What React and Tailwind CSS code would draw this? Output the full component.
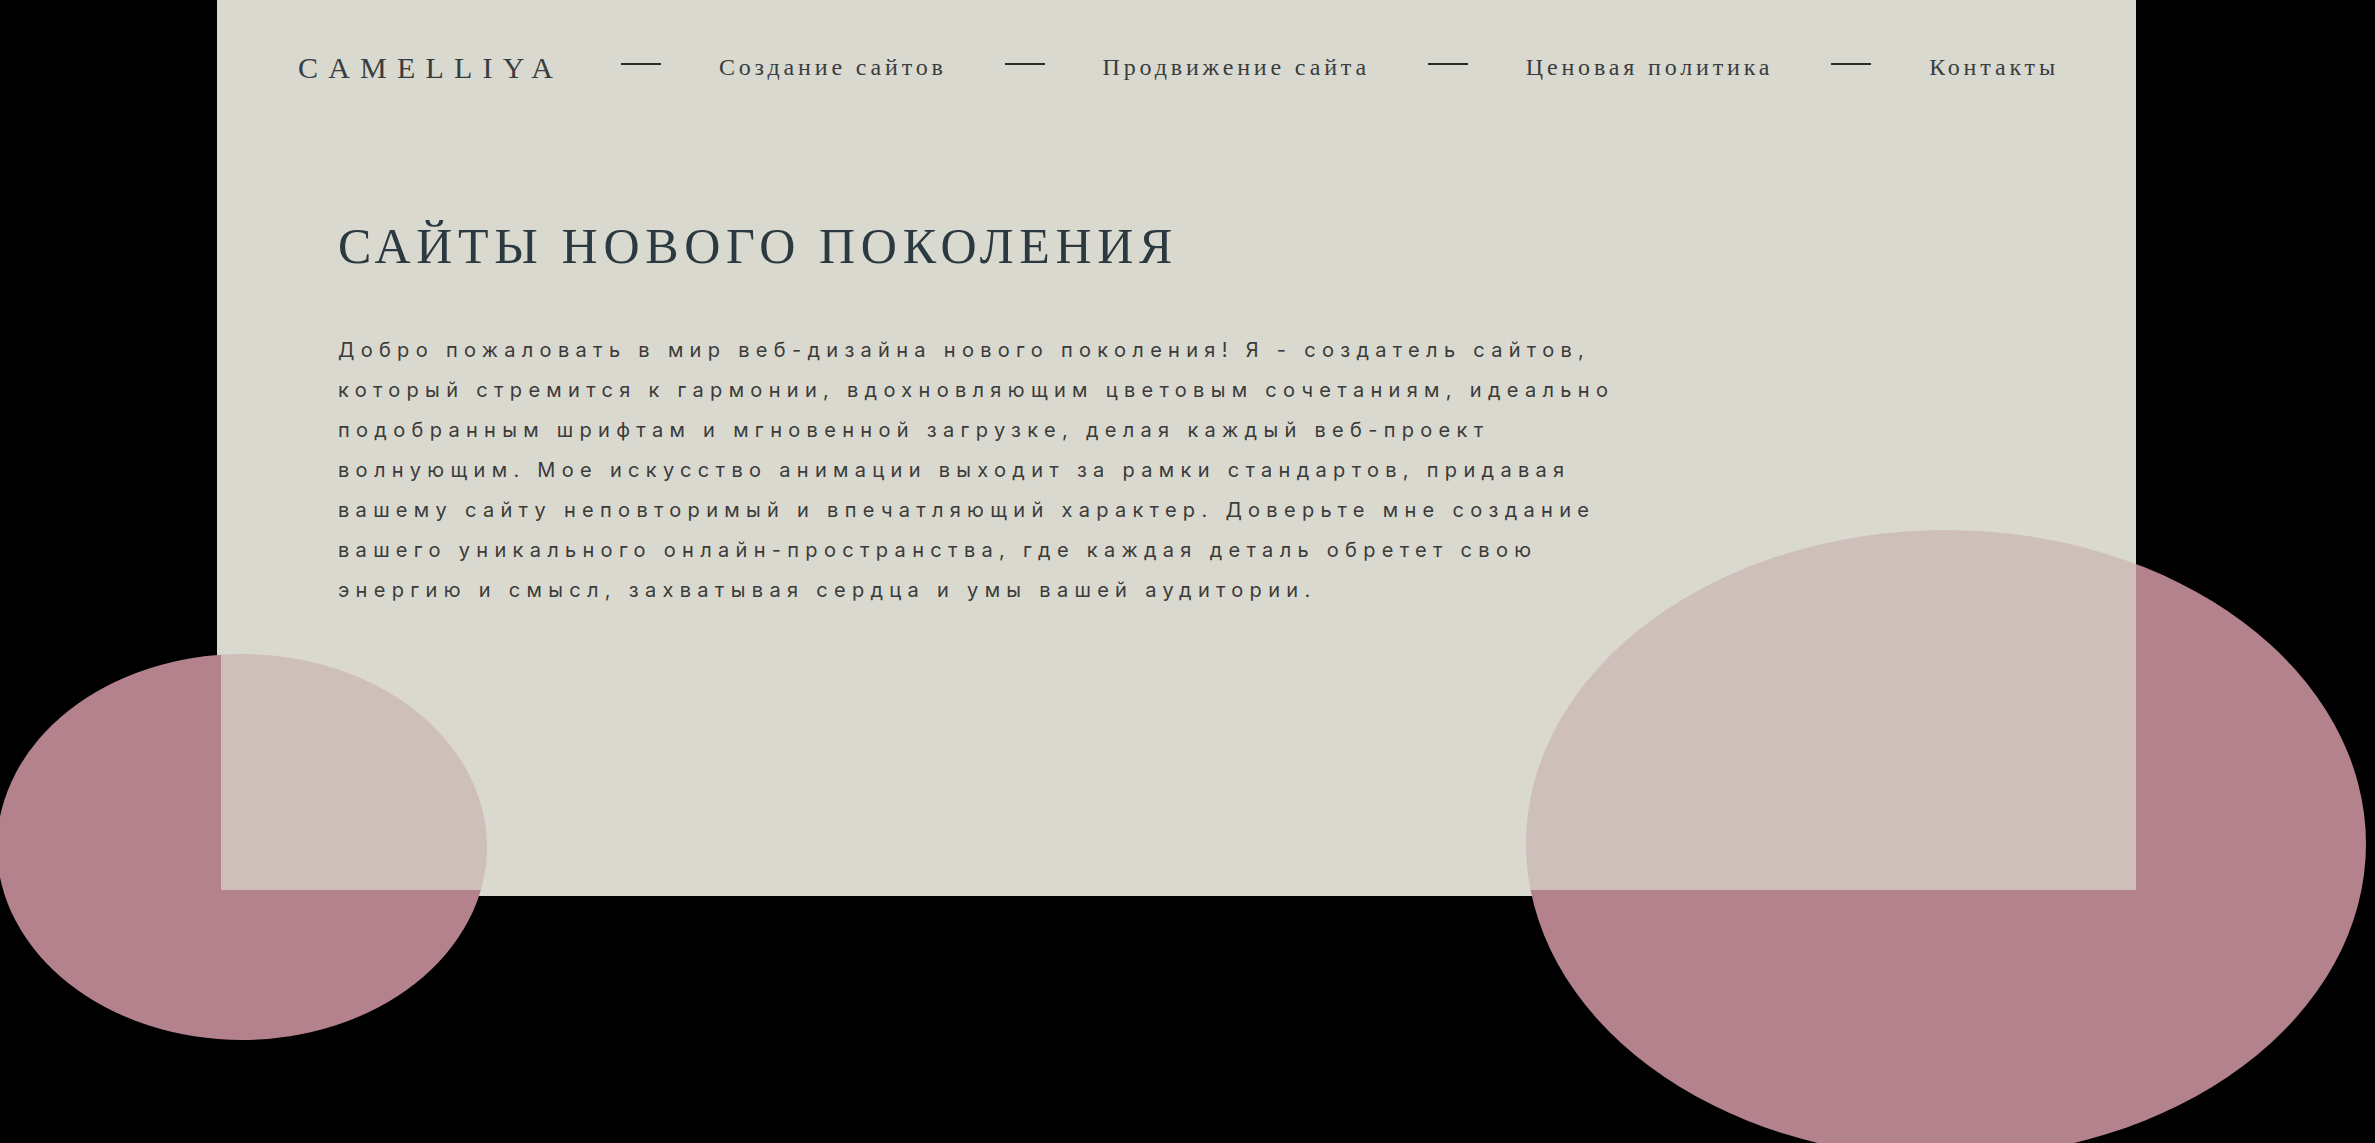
import React from 'react'

const NAV_LINKS = ['Создание сайтов', 'Продвижение сайта', 'Ценовая политика', 'Контакты']

const serif = "font-['Liberation_Serif','DejaVu_Serif',serif]"
const sans = "font-['Inter','Noto_Sans',sans-serif]"

function Dash() {
  return <span className="block w-10 h-[1.5px] bg-[#2a2a2a] mb-[6px]" />
}

export default function App() {
  return (
    <div className="relative h-[1143px] overflow-hidden bg-black">
      {/* card */}
      <section className="ml-[217px] w-[1919px] h-[896px] bg-[#dad9cf]">
        <div className="relative z-10 ml-1 h-[890px] bg-[#dad9cf]/70">

          {/* Header */}
          <nav className={`h-[134px] px-[77px] flex items-center justify-between ${serif} text-[#383d40]`}>
            <span className="text-[30px] tracking-[0.34em]">CAMELLIYA</span>
            {NAV_LINKS.map((l) => (
              <React.Fragment key={l}>
                <Dash />
                <a href="#" className="text-[24px] tracking-[0.16em]">{l}</a>
              </React.Fragment>
            ))}
          </nav>

          {/* Hero */}
          <div className="pl-[117px]">
            <h1 className={`mt-[87px] ${serif} text-[50px] leading-none tracking-[0.113em] text-[#2b3940]`}>
              САЙТЫ НОВОГО ПОКОЛЕНИЯ
            </h1>
            <p className={`mt-[59px] max-w-[1310px] ${sans} text-[20px] leading-[40px] tracking-[0.315em] text-[#3a3b3a]`}>
              Добро пожаловать в мир веб-дизайна нового поколения! Я - создатель сайтов,
              который стремится к гармонии, вдохновляющим цветовым сочетаниям, идеально
              подобранным шрифтам и мгновенной загрузке, делая каждый веб-проект
              волнующим. Мое искусство анимации выходит за рамки стандартов, придавая
              вашему сайту неповторимый и впечатляющий характер. Доверьте мне создание
              вашего уникального онлайн-пространства, где каждая деталь обретет свою
              энергию и смысл, захватывая сердца и умы вашей аудитории.
            </p>
          </div>
        </div>
      </section>

      {/* decorative blobs */}
      <div className="absolute left-[-3px] top-[654px] w-[490px] h-[386px] rounded-[50%] bg-[#b4828c]" />
      <div className="absolute left-[1526px] top-[530px] w-[840px] h-[628px] rounded-[50%] bg-[#b4828c]" />
    </div>
  )
}
